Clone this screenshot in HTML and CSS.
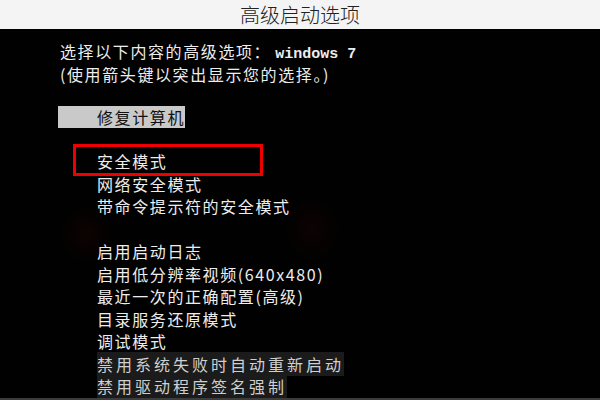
FILE: index.html
```html
<!DOCTYPE html>
<html lang="zh-CN">

<head>
    <meta charset="UTF-8">
    <meta name="viewport" content="width=device-width, initial-scale=1.0">
    <title>高级启动选项</title>
    <link rel="stylesheet" href="styles.css">
</head>

<body>
    <div class="page">
        <!-- 标题 -->
        <div class="title_bar">高级启动选项</div>

        <!-- 启动画面 -->
        <div class="screen">
            <div class="line">选择以下内容的高级选项：<span class="en">windows 7</span></div>
            <div class="line">(使用箭头键以突出显示您的选择。)</div>

            <div class="repair">修复计算机</div>

            <div class="menu">
                <div class="item item_mark">安全模式<span class="mark"></span></div>
                <div class="item">网络安全模式</div>
                <div class="item">带命令提示符的安全模式</div>
                <div class="item"></div>
                <div class="item">启用启动日志</div>
                <div class="item">启用低分辨率视频(640x480)</div>
                <div class="item">最近一次的正确配置(高级)</div>
                <div class="item">目录服务还原模式</div>
                <div class="item">调试模式</div>
                <div class="item"><span class="dim">禁用系统失败时自动重新启动</span></div>
                <div class="item"><span class="dim">禁用驱动程序签名强制</span></div>
            </div>
        </div>
    </div>
</body>

</html>
```

FILE: styles.css
```css
/* 기본 */
html,
body {
    margin: 0;
    padding: 0;
}

body {
    background-color: #000;
    font-family: "Noto Sans CJK SC", "Noto Sans", sans-serif;
}

.page {
    width: 600px;
    height: 400px;

    display: flex;
    flex-direction: column;
}

/* 标题 */
.title_bar {
    height: 29px;

    background-color: #f4f4f4;
    color: #222;

    font-size: 20px;
    font-weight: 300;
    line-height: 29px;
    text-align: center;
}

/* 黑色画面 */
.screen {
    flex: 1;

    padding-top: 11px;
    padding-left: 60px;

    background-color: #010101;
    background-image:
        radial-gradient(ellipse 28px 30px at 86px 205px, rgba(60, 6, 6, 0.22), transparent),
        radial-gradient(ellipse 30px 34px at 312px 200px, rgba(60, 8, 8, 0.2), transparent);
    border-bottom: 3px solid #3c3c3c;

    color: #ededed;
    font-size: 16px;
    letter-spacing: 1.6px;
}

.line {
    height: 22.5px;
    line-height: 22.5px;
}

.en {
    margin-left: 4px;

    font-family: "Liberation Mono", monospace;
    font-size: 15px;
    font-weight: bold;
    letter-spacing: 0;
}

.repair {
    width: 88px;
    height: 22px;

    margin-top: 21px;
    margin-left: -2px;
    padding-left: 39px;

    background-color: #c9c9c9;
    color: #111;
    line-height: 22px;
}

.menu {
    margin-top: 22px;
    padding-left: 37px;
}

.item {
    height: 22.5px;
    line-height: 22.5px;
}

.item_mark {
    position: relative;
}

/* 红框 */
.mark {
    position: absolute;
    left: -24px;
    top: -6px;

    width: 184px;
    height: 26px;

    border: 3px solid #ee0000;
}

.dim {
    background-color: #1b1b1b;
    color: #cfcfcf;
    letter-spacing: 3px;
}
```
